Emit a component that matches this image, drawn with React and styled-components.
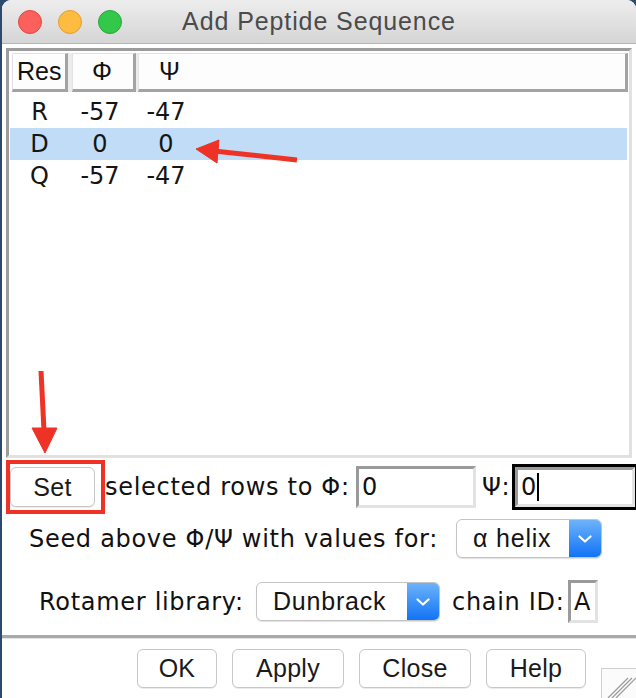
import React from "react";
import styled, { createGlobalStyle } from "styled-components";

const GlobalStyle = createGlobalStyle`
  html, body {
    margin: 0;
    padding: 0;
    background: #2b4a6e;
  }
`;

const LABEL_FONT = `"DejaVu Sans", "Noto Sans", sans-serif`;
const UI_FONT = `"Liberation Sans", Arial, sans-serif`;

const Page = styled.div`
  position: relative;
  width: 636px;
  height: 698px;
  overflow: hidden;
`;

const Window = styled.div`
  margin-left: 2px;
  width: 634px;
  height: 698px;
  background: #ffffff;
  border-radius: 9px 9px 0 0;
  overflow: hidden;
  display: flex;
  flex-direction: column;
`;

const TitleBar = styled.div`
  height: 43px;
  flex-shrink: 0;
  border-bottom: 1px solid #b4b4b4;
  background: linear-gradient(#ededed, #d5d5d5);
  display: grid;
  grid-template-columns: 1fr auto 1fr;
  align-items: center;
`;

const Lights = styled.div`
  display: flex;
  gap: 16px;
  padding-left: 16px;
`;

const Light = styled.span`
  width: 24px;
  height: 24px;
  box-sizing: border-box;
  border-radius: 50%;
  background: ${(p) => p.$fill};
  border: 1px solid ${(p) => p.$edge};
`;

const Title = styled.div`
  font-family: ${UI_FONT};
  font-size: 25px;
  letter-spacing: 0.9px;
  color: #4b4b4b;
`;

const Body = styled.div`
  flex: 1;
  display: flex;
  flex-direction: column;
  padding: 4px 0 0 4px;
`;

const TableFrame = styled.div`
  width: 626px;
  height: 410px;
  box-sizing: border-box;
  border: 3px solid;
  border-color: #9c9c9c #e1e1e1 #e1e1e1 #9c9c9c;
  background: #ffffff;
`;

const HeaderRow = styled.div`
  display: flex;
  height: 39px;
  margin: 2px 1px 0 3px;
  background: #ececec;
`;

const HeaderCell = styled.div`
  box-sizing: border-box;
  height: 39px;
  ${(p) => (p.$width ? `width: ${p.$width}px;` : "flex: 1;")}
  margin-left: ${(p) => p.$gap || 0}px;
  padding-left: ${(p) => p.$pad}px;
  border-top: 1px solid #e2e2e2;
  border-left: 1px solid #e2e2e2;
  border-right: 3px solid #a3a3a3;
  border-bottom: 3px solid #a3a3a3;
  background: #fdfdfd;
  display: flex;
  align-items: center;
  font-family: ${UI_FONT};
  font-size: 25px;
  color: #111;
`;

const Rows = styled.div`
  margin: 4px 2px 0 1px;
`;

const Row = styled.div`
  display: grid;
  grid-template-columns: 59px 62px 70px;
  height: 32px;
  background: ${(p) => (p.$selected ? "#c0dcf7" : "transparent")};
`;

const Cell = styled.div`
  text-align: center;
  font-family: ${LABEL_FONT};
  font-size: 24px;
  line-height: 33px;
  color: #151515;
`;

const ControlRow = styled.div`
  display: flex;
  align-items: center;
  height: ${(p) => p.$height}px;
  margin-top: ${(p) => p.$top}px;
  margin-left: ${(p) => p.$left || 0}px;
`;

const Label = styled.div`
  box-sizing: border-box;
  width: ${(p) => p.$width}px;
  padding-left: ${(p) => p.$pad || 0}px;
  flex-shrink: 0;
  white-space: nowrap;
  font-family: ${LABEL_FONT};
  font-size: 24px;
  letter-spacing: 0.7px;
  color: #111;
`;

const Callout = styled.div`
  box-sizing: border-box;
  width: 99px;
  height: 54px;
  flex-shrink: 0;
  border: 4px solid #ee3326;
  padding: 3px 0 0 0;
`;

const PushButton = styled.button`
  box-sizing: border-box;
  width: ${(p) => p.$width}px;
  height: ${(p) => p.$height || 39}px;
  flex-shrink: 0;
  padding: 0;
  background: #ffffff;
  border: 1px solid #c7c7c7;
  border-radius: 6px;
  box-shadow: 0 1px 0 rgba(0, 0, 0, 0.08);
  font-family: ${UI_FONT};
  font-size: 25px;
  letter-spacing: 0.3px;
  color: #1a1a1a;
`;

const Entry = styled.div`
  box-sizing: border-box;
  width: ${(p) => p.$width}px;
  height: ${(p) => p.$height}px;
  flex-shrink: 0;
  border: 3px solid;
  border-color: #9a9a9a #e3e3e3 #e3e3e3 #9a9a9a;
  background: #fff;
  display: flex;
  align-items: center;
  padding-left: 3px;
  font-family: ${LABEL_FONT};
  font-size: 24px;
  color: #111;
`;

const FocusRing = styled.div`
  box-sizing: border-box;
  width: 126px;
  height: 46px;
  flex-shrink: 0;
  border: 3px solid #000;
  display: flex;
`;

const Caret = styled.span`
  display: inline-block;
  width: 2px;
  height: 28px;
  margin-left: 1px;
  background: #000;
`;

const Dropdown = styled.div`
  box-sizing: border-box;
  width: ${(p) => p.$width}px;
  height: 39px;
  flex-shrink: 0;
  display: flex;
  border: 1px solid #c4c4c4;
  border-radius: 6px;
  background: #fff;
  box-shadow: 0 1px 1px rgba(0, 0, 0, 0.12);
  overflow: hidden;
`;

const DropText = styled.div`
  flex: 1;
  display: flex;
  align-items: center;
  padding-left: 16px;
  font-family: ${UI_FONT};
  font-size: 25px;
  letter-spacing: 0.8px;
  color: #151515;
`;

const DropArrow = styled.div`
  width: 32px;
  display: flex;
  align-items: center;
  justify-content: center;
  background: linear-gradient(#6cb3fb, #1273f5);
`;

const Separator = styled.div`
  margin: 12px 0 0 -4px;
  height: 3px;
  background: #a9a9a9;
  border-bottom: 1px solid #e3e3e3;
`;

const ButtonRow = styled.div`
  display: flex;
  align-items: flex-start;
  gap: 15px;
  height: 49px;
  margin-top: 10px;
  padding-left: 131px;
`;

const Grip = styled.div`
  margin-left: auto;
  align-self: flex-end;
  width: 41px;
  height: 30px;
  box-sizing: border-box;
  border-top: 1px solid #cfcfcf;
  border-left: 1px solid #cfcfcf;
  background: #fbfbfb;
`;

const Overlay = styled.svg`
  position: absolute;
  top: 0;
  left: 0;
  pointer-events: none;
`;

const Chevron = () => (
  <svg width="14" height="8" viewBox="0 0 14 8">
    <path d="M1.5 1.5 L7 6.5 L12.5 1.5" fill="none" stroke="#fff" strokeWidth="2.2" strokeLinecap="round" strokeLinejoin="round" />
  </svg>
);

const Select = ({ width, value }) => (
  <Dropdown $width={width}>
    <DropText>{value}</DropText>
    <DropArrow>
      <Chevron />
    </DropArrow>
  </Dropdown>
);

const residues = [
  { res: "R", phi: "-57", psi: "-47" },
  { res: "D", phi: "0", psi: "0", selected: true },
  { res: "Q", phi: "-57", psi: "-47" },
];

const App = () => {
  return (
    <Page>
      <GlobalStyle />
      <Window>
        <TitleBar>
          <Lights>
            <Light $fill="#fc605c" $edge="#de4842" />
            <Light $fill="#fdbc40" $edge="#de9f34" />
            <Light $fill="#34c84a" $edge="#27a83a" />
          </Lights>
          <Title>Add Peptide Sequence</Title>
          <div />
        </TitleBar>

        <Body>
          <TableFrame>
            <HeaderRow>
              <HeaderCell $width={56} $pad={4}>Res</HeaderCell>
              <HeaderCell $width={64} $gap={4} $pad={19}>Φ</HeaderCell>
              <HeaderCell $gap={2} $pad={20}>Ψ</HeaderCell>
            </HeaderRow>
            <Rows>
              {residues.map((r) => (
                <Row key={r.res} $selected={r.selected}>
                  <Cell>{r.res}</Cell>
                  <Cell>{r.phi}</Cell>
                  <Cell>{r.psi}</Cell>
                </Row>
              ))}
            </Rows>
          </TableFrame>

          <ControlRow $height={54} $top={2}>
            <Callout>
              <PushButton $width={85} $height={40}>Set</PushButton>
            </Callout>
            <Label $width={251}>selected rows to Φ:</Label>
            <Entry $width={120} $height={42}>0</Entry>
            <Label $width={36} $pad={6}>Ψ:</Label>
            <FocusRing>
              <Entry $width={120} $height={40}>
                0<Caret />
              </Entry>
            </FocusRing>
          </ControlRow>

          <ControlRow $height={39} $top={5} $left={23}>
            <Label $width={427}>Seed above Φ/Ψ with values for:</Label>
            <Select width={146} value="α helix" />
          </ControlRow>

          <ControlRow $height={43} $top={22} $left={33}>
            <Label $width={217}>Rotamer library:</Label>
            <Select width={184} value="Dunbrack" />
            <Label $width={128} $pad={12}>chain ID:</Label>
            <Entry $width={30} $height={43}>A</Entry>
          </ControlRow>

          <Separator />

          <ButtonRow>
            <PushButton $width={80}>OK</PushButton>
            <PushButton $width={112}>Apply</PushButton>
            <PushButton $width={112}>Close</PushButton>
            <PushButton $width={100}>Help</PushButton>
            <Grip>
              <svg width="40" height="29" viewBox="0 0 40 29">
                <g stroke="#9a9a9a" strokeWidth="1.2">
                  <line x1="6" y1="29" x2="26" y2="9" />
                  <line x1="10" y1="29" x2="30" y2="9" />
                  <line x1="14" y1="29" x2="34" y2="9" />
                </g>
              </svg>
            </Grip>
          </ButtonRow>
        </Body>
      </Window>

      <Overlay width="636" height="698" viewBox="0 0 636 698">
        <g fill="#ee3326" stroke="#ee3326">
          <line x1="297" y1="160" x2="214" y2="151" strokeWidth="5" />
          <polygon points="196,149 219,140 217,163" strokeWidth="1" />
          <line x1="41" y1="371" x2="44" y2="431" strokeWidth="5" />
          <polygon points="45,453 32,428 57,428" strokeWidth="1" />
        </g>
      </Overlay>
    </Page>
  );
};

export default App;
